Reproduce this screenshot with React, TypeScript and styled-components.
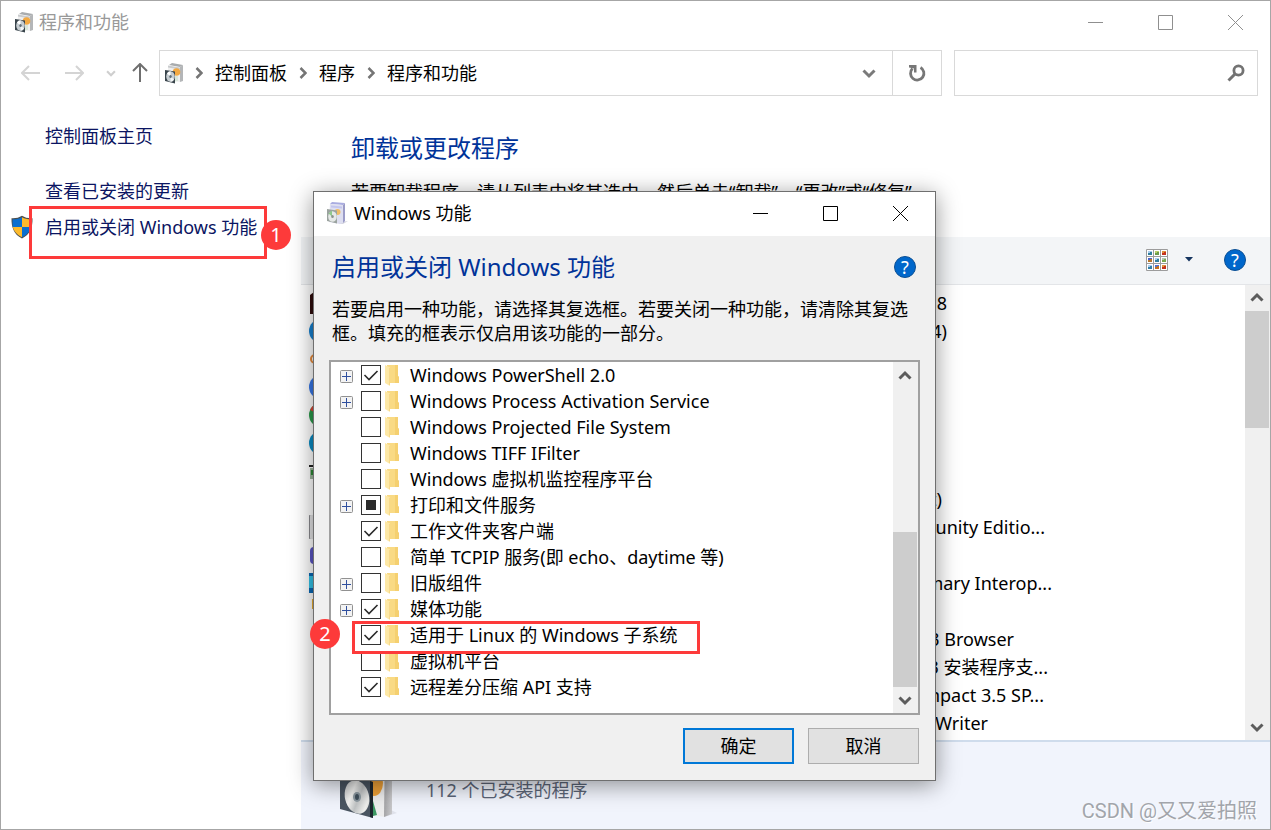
import React from 'react';
import styled, { createGlobalStyle, css } from 'styled-components';

const Global = createGlobalStyle`
  *, *::before, *::after { box-sizing: border-box; }
  body {
    margin: 0;
    background: #ffffff;
    color: #000000;
    font: 18px/24px "Noto Sans", "Noto Sans CJK SC", sans-serif;
  }
  button, input { font: inherit; color: inherit; }
  h1, h2, p, ul { margin: 0; padding: 0; font-weight: 400; }
  ul { list-style: none; }
  svg { display: block; flex: none; }
`;

const plainButton = css`
  display: flex;
  align-items: center;
  justify-content: center;
  padding: 0;
  border: 0;
  background: transparent;
`;

/* ---------- window frame ---------- */

const Window = styled.div`
  position: relative;
  display: flex;
  flex-direction: column;
  min-height: 100vh;
  border: 1px solid #a6a6a6;
  overflow: hidden;
`;

const TitleBar = styled.header<{ $muted?: boolean }>`
  display: flex;
  align-items: center;
  height: 44px;
  padding: 0 0 2px ${p => (p.$muted ? 14 : 12)}px;
  gap: 6px;
  background: #ffffff;
  color: ${p => (p.$muted ? '#999999' : '#000000')};
`;

const TitleText = styled.span`
  flex: 1;
  white-space: nowrap;
`;

const CaptionGroup = styled.div`
  display: flex;
`;

const CaptionButton = styled.button`
  ${plainButton}
  width: 70px;
  height: 42px;
`;

const NavBar = styled.nav`
  display: flex;
  align-items: center;
  height: 46px;
  margin: 5px 12px 0 14px;
`;

const NavButton = styled.button<{ $width: number }>`
  ${plainButton}
  width: ${p => p.$width}px;
  height: 46px;
`;

const AddressBar = styled.div`
  display: flex;
  flex: 1;
  align-items: center;
  height: 46px;
  margin-right: 12px;
  padding-left: 5px;
  border: 1px solid #d9d9d9;
`;

const Crumbs = styled.div`
  display: flex;
  flex: 1;
  align-items: center;
  gap: 12px;
`;

const Crumb = styled.a`
  color: #000000;
  text-decoration: none;
  white-space: nowrap;
`;

const RefreshButton = styled.button`
  ${plainButton}
  width: 49px;
  height: 44px;
  border-left: 1px solid #d9d9d9;
`;

const SearchBox = styled.label`
  display: flex;
  align-items: center;
  width: 304px;
  height: 46px;
  padding-right: 12px;
  border: 1px solid #d9d9d9;
`;

const SearchInput = styled.input`
  flex: 1;
  min-width: 0;
  height: 44px;
  padding: 0 12px;
  border: 0;
  outline: 0;
  background: transparent;
`;

const Body = styled.div`
  display: flex;
  flex: 1;
`;

/* ---------- left column ---------- */

const Sidebar = styled.aside`
  display: flex;
  flex-direction: column;
  width: 300px;
  padding: 28px 0 0 10px;
`;

const SideRow = styled.div<{ $gap: number }>`
  position: relative;
  display: flex;
  align-items: center;
  gap: 11px;
  height: 24px;
  margin-bottom: ${p => p.$gap}px;
`;

const IconSlot = styled.span`
  width: 23px;
`;

const SideLink = styled.a`
  color: #0b1562;
  text-decoration: none;
  white-space: nowrap;
`;

/* ---------- annotations over the windows ---------- */

const Marker = styled.div<{ $x: number; $y: number; $w: number; $h: number }>`
  position: absolute;
  z-index: 2;
  left: ${p => p.$x}px;
  top: ${p => p.$y}px;
  width: ${p => p.$w}px;
  height: ${p => p.$h}px;
  border: 3px solid #fd3a3a;
  pointer-events: none;
`;

const Badge = styled.span<{ $x: number; $y: number }>`
  position: absolute;
  z-index: 3;
  left: ${p => p.$x}px;
  top: ${p => p.$y}px;
  width: 30px;
  height: 30px;
  border-radius: 50%;
  background: #fd3a3a;
  color: #ffffff;
  font-size: 20px;
  line-height: 30px;
  text-align: center;
`;

const Watermark = styled.span`
  position: absolute;
  right: 13px;
  bottom: 6px;
  color: #a2a5ab;
  font: 20px/24px Roboto, "Noto Sans CJK SC", sans-serif;
  text-shadow: 1px 1px 0 #ffffff;
`;

/* ---------- main column ---------- */

const Main = styled.main`
  display: flex;
  flex: 1;
  flex-direction: column;
  min-width: 0;
`;

const Intro = styled.section`
  height: 141px;
  padding: 36px 0 0 50px;
`;

const Heading = styled.h1`
  color: #003399;
  font-size: 24px;
  line-height: 32px;
`;

const IntroText = styled.p`
  margin-top: 16px;
  white-space: nowrap;
`;

const Toolbar = styled.div`
  display: flex;
  align-items: center;
  justify-content: flex-end;
  height: 48px;
  padding: 0 24px 2px 0;
  border-bottom: 1px solid #e3e5e8;
  background: #f3f5f7;
`;

const ToolButton = styled.button<{ $width: number }>`
  ${plainButton}
  width: ${p => p.$width}px;
  height: 32px;
`;

const HelpSlot = styled.div`
  margin-left: 20px;
`;

const ListArea = styled.section`
  display: flex;
  flex: 1;
`;

const ProgramList = styled.ul`
  flex: 1;
  padding: 4px 0 3px 8px;
`;

const Program = styled.li`
  display: flex;
  align-items: center;
  height: 28px;
`;

const ProgramName = styled.span<{ $width: number }>`
  width: ${p => p.$width}px;
  text-align: right;
  white-space: nowrap;
`;

const ScrollTrack = styled.div`
  display: flex;
  flex-direction: column;
  width: 25px;
  background: #f0f0f0;
`;

const ScrollButton = styled.button<{ $height: number }>`
  ${plainButton}
  width: 24px;
  height: ${p => p.$height}px;
`;

const ScrollThumb = styled.div<{ $height: number }>`
  width: 24px;
  height: ${p => p.$height}px;
  background: #cdcdcd;
`;

const Spacer = styled.div`
  flex: 1;
`;

const Details = styled.footer`
  display: flex;
  gap: 27px;
  height: 89px;
  padding: 3px 0 0 38px;
  border-top: 2px solid #cfdcec;
  background: #f1f4fc;
  color: #5b6577;
`;

const DetailsText = styled.span`
  padding-top: 33px;
`;

/* ---------- features dialog ---------- */

const Dialog = styled.section`
  position: absolute;
  left: 312px;
  top: 190px;
  width: 623px;
  border: 1px solid #6f6f6f;
  background: #f0f0f0;
  box-shadow: 0 4px 22px rgba(0, 0, 0, 0.42);
`;

const DialogBody = styled.div`
  padding: 15px 15px 16px;
`;

const DialogHead = styled.div`
  display: flex;
  align-items: center;
  justify-content: space-between;
  padding: 0 4px 0 3px;
`;

const DialogText = styled.p`
  margin: 14px 3px 15px;
`;

const FeatureBox = styled.div`
  display: flex;
  height: 355px;
  border: 2px solid #a0a0a0;
  background: #ffffff;
`;

const FeatureList = styled.ul`
  flex: 1;
  padding-left: 9px;
`;

const Feature = styled.li`
  position: relative;
  display: flex;
  align-items: center;
  height: 26px;
`;

const Expander = styled.button`
  ${plainButton}
  width: 13px;
  height: 13px;
  margin: 2px 8px 0 0;
`;

const ExpanderSlot = styled.span`
  width: 21px;
`;

const FeatureLabel = styled.label`
  display: flex;
  align-items: center;
  gap: 4px;
  white-space: nowrap;
`;

const FeatureText = styled.span`
  padding-left: 6px;
`;

const CheckWrap = styled.span`
  display: grid;
  width: 20px;
  height: 20px;

  & > * { grid-area: 1 / 1; }
`;

const Check = styled.input`
  appearance: none;
  width: 20px;
  height: 20px;
  margin: 0;
  border: 1px solid #333333;
  background: #ffffff;
`;

const Actions = styled.div`
  display: flex;
  justify-content: flex-end;
  gap: 14px;
  margin-top: 13px;
  padding-right: 1px;
`;

const ActionButton = styled.button<{ $primary?: boolean }>`
  width: 111px;
  height: 36px;
  padding: 0;
  border: ${p => (p.$primary ? '2px solid #0078d7' : '1px solid #adadad')};
  background: #e1e1e1;
`;

/* ---------- drawings ---------- */

const ProgramsIcon = ({ tint = '#3a454c' }: { tint?: string }) => (
  <svg width="18" height="22" viewBox="0 0 18 22" aria-hidden="true">
    <path d="M4 3 7 1l11 2-3 2z" fill="#a9acae" />
    <path d="M3 4.500 15 6.500V20L3 18z" fill="#efefef" />
    <path d="M3 3.500 15 5.500v2l-12-2z" fill="#c9cbcd" />
    <path d="m15 5 3-2v16l-3 1z" fill="#b4b6b8" />
    <circle cx="11.500" cy="10" r="3.800" fill="#f3a942" />
    <path d="M10 14h3v5l-3 .5z" fill="#d9e6da" />
    <path d="M0 8 10 9.500V21.500L0 19z" fill={tint} />
    <ellipse cx="5.500" cy="14.500" rx="4.300" ry="5.200" fill="#c6cdd1" />
    <path d="M5.500 14.500 2 11.500a4.300 5 0 0 1 3.500-2.200z" fill="#ffffff" />
    <path d="m5.500 14.500 3.500 3a4.300 5 0 0 1-3.500 2.200z" fill="#f4f6f7" />
    <ellipse cx="5.500" cy="14.500" rx="1.200" ry="1.500" fill="#5f6d76" />
  </svg>
);

const FeaturesIcon = () => (
  <svg width="22" height="24" viewBox="0 0 22 24" aria-hidden="true">
    <path d="M14 21 22 20l-5 3-4 0z" fill="#d5d5df" />
    <path d="M4 3 6 1l13 1-2 2z" fill="#a9ace0" />
    <path d="M4 3 17 4v18l-3 1L3 21z" fill="#dedff0" />
    <path d="m17 4 2-2v18l-2 2z" fill="#9b9cc8" />
    <path d="M5 4.500 16 5.500v2L5 6.500z" fill="#c3c5ee" />
    <circle cx="11.500" cy="11" r="3" fill="#efbd66" />
    <path d="M1 8 11 9.500v13L1 20z" fill="#9ba39f" />
    <ellipse cx="6.500" cy="15.500" rx="4.300" ry="5.300" fill="#e6e9e7" />
    <path d="M2.500 12.500 6 9.500v6z" fill="#8fc98c" />
    <ellipse cx="6.500" cy="15.500" rx="1.300" ry="1.600" fill="#8a918e" />
  </svg>
);

const BigProgramsIcon = () => (
  <svg width="60" height="76" viewBox="0 0 60 76" aria-hidden="true">
    <defs>
      <linearGradient id="disc" x1="0" y1="0" x2="1" y2="1">
        <stop offset="0" stopColor="#b9bcbd" />
        <stop offset="0.350" stopColor="#f3f3f1" />
        <stop offset="0.550" stopColor="#bfc2c3" />
        <stop offset="0.800" stopColor="#efefed" />
        <stop offset="1" stopColor="#b2b5b6" />
      </linearGradient>
      <linearGradient id="side" x1="0" x2="1">
        <stop offset="0" stopColor="#a3a3a5" />
        <stop offset="1" stopColor="#c9c9cb" />
      </linearGradient>
    </defs>
    <path d="m45 72 13-4-6-3-7 2z" fill="#dfe1ea" />
    <path d="M20 6h26v66l-14-2z" fill="#ececec" />
    <path d="M46 6h7v63l-8 3z" fill="url(#side)" />
    <ellipse cx="35" cy="38" rx="9" ry="13" fill="#eda037" />
    <path d="m34 56 4 14-4 1z" fill="#3d9863" />
    <path d="M1 28 34 37v36L1 64z" fill="#4a5561" />
    <path d="m31 36 3 1v36l-3-1z" fill="#1d262e" />
    <ellipse cx="18" cy="52" rx="12" ry="17" transform="rotate(-14 18 52)" fill="url(#disc)" />
    <ellipse cx="18" cy="52" rx="4" ry="5" fill="#8a969e" />
    <ellipse cx="18" cy="52" rx="2" ry="3" fill="#3f4f5b" />
  </svg>
);

const MinIcon = ({ color }: { color: string }) => (
  <svg width="15" height="15" viewBox="0 0 15 15" aria-hidden="true">
    <path d="M0 7.500h15" stroke={color} />
  </svg>
);
const MaxIcon = ({ color }: { color: string }) => (
  <svg width="15" height="15" viewBox="0 0 15 15" aria-hidden="true">
    <path d="M.5.500h14v14H.5z" stroke={color} fill="none" />
  </svg>
);
const CloseIcon = ({ color }: { color: string }) => (
  <svg width="15" height="15" viewBox="0 0 15 15" aria-hidden="true">
    <path d="m0 0 15 15M15 0 0 15" stroke={color} />
  </svg>
);

const Captions = ({ color }: { color: string }) => (
  <CaptionGroup>
    <CaptionButton aria-label="最小化"><MinIcon color={color} /></CaptionButton>
    <CaptionButton aria-label="最大化"><MaxIcon color={color} /></CaptionButton>
    <CaptionButton aria-label="关闭"><CloseIcon color={color} /></CaptionButton>
  </CaptionGroup>
);

const ArrowIcon = ({ turn, color }: { turn: number; color: string }) => (
  <svg width="20" height="20" viewBox="0 0 20 20" aria-hidden="true">
    <path
      d="M1 10h18M8 3 1 10l7 7"
      transform={`rotate(${turn} 10 10)`}
      stroke={color}
      strokeWidth="2"
      fill="none"
    />
  </svg>
);

const Chevron = ({ turn = 0, w = 3, color = '#7a7a7a', size = 14 }: {
  turn?: number; w?: number; color?: string; size?: number;
}) => (
  <svg width={size} height={size} viewBox="0 0 14 14" aria-hidden="true">
    <path
      d="m1.500 4.500 5.500 5.500 5.500-5.500"
      transform={`rotate(${turn} 7 7)`}
      stroke={color}
      strokeWidth={w}
      fill="none"
    />
  </svg>
);

const CrumbChevron = () => (
  <svg width="8" height="12" viewBox="0 0 8 12" aria-hidden="true">
    <path d="m1.500 1 5 5-5 5" stroke="#757575" strokeWidth="2.500" fill="none" />
  </svg>
);

const RefreshIcon = () => (
  <svg width="18" height="18" viewBox="0 0 18 18" aria-hidden="true">
    <path d="M12.500 3.500A6.700 6.700 0 1 1 4.500 4.600" stroke="#777777" strokeWidth="2.800" fill="none" />
    <path d="M1 1h7.500v7.500H6V4.500L1 3.500z" fill="#777777" />
  </svg>
);

const SearchIcon = () => (
  <svg width="18" height="18" viewBox="0 0 18 18" aria-hidden="true">
    <circle cx="11.500" cy="6.500" r="4.600" stroke="#737373" strokeWidth="2.800" fill="none" />
    <path d="M8 10 1.500 16.500" stroke="#737373" strokeWidth="3" />
  </svg>
);

const ShieldIcon = () => (
  <svg width="23" height="24" viewBox="0 0 23 24" aria-hidden="true">
    <path d="M11 .8c3 2 6.500 2.600 10.500 2.400.2 9-2.400 16.300-10.500 20.200C2.900 19.500.3 12.200.5 3.200c4 .2 7.500-.4 10.500-2.400z" fill="#4b4f50" />
    <path d="M11 2.200v9.800H1.700c-.3-2.400-.3-5-.1-7.700 3.700.1 6.700-.5 9.400-2.100z" fill="#0a6fd0" />
    <path d="M11 2.200v9.800h9.300c.3-2.400.3-5 .1-7.700-3.700.1-6.700-.5-9.400-2.100z" fill="#fcba2c" />
    <path d="M11 12v10.200C5.900 19.700 2.800 16.300 1.700 12z" fill="#fcba2c" />
    <path d="M11 12v10.200c5.100-2.500 8.200-5.900 9.300-10.200z" fill="#0a6fd0" />
  </svg>
);

const HelpCircle = styled.span`
  display: block;
  width: 22px;
  height: 22px;
  border: 1px solid #0b4f94;
  border-radius: 50%;
  background: #0067cb;
  color: #ffffff;
  font-size: 18px;
  line-height: 20px;
  text-align: center;
`;

const ViewIcon = () => {
  const fills = ['#2f7f9c', '#6b9a4b', '#c4321e', '#b8762a', '#2f7f9c', '#7aa850', '#2f80a8', '#c4701e', '#c4321e'];
  const skies = ['#a9cdee', '#b9cf6a', '#e0903a', '#4860c8', '#a9cdee', '#b0c8b0', '#a9cdee', '#5070d0', '#e0903a'];
  return (
    <svg width="22" height="22" viewBox="0 0 22 22" aria-hidden="true">
      <path d="M.5.500h21v21H.5zM7.500.500v21M14.500.500v21M.5 7.500h21M.5 14.500h21" stroke="#9c9c9c" fill="#ffffff" />
      {fills.map((f, i) => {
        const x = 2 + (i % 3) * 7;
        const y = 2 + Math.floor(i / 3) * 7;
        return (
          <g key={i}>
            <rect x={x} y={y} width="4" height="4" fill={skies[i]} />
            <path d={`M${x} ${y + 2}h2v-1h2v3h-4z`} fill={f} />
          </g>
        );
      })}
    </svg>
  );
};

const DownTriangle = () => (
  <svg width="8" height="5" viewBox="0 0 8 5" aria-hidden="true">
    <path d="M0 0h8L4 4.500z" fill="#15345f" />
  </svg>
);

const FolderIcon = () => (
  <svg width="15" height="22" viewBox="0 0 15 22" aria-hidden="true">
    <path d="M2 1h11v11l1 1v6H2z" fill="#f9da84" />
    <path d="M10 1h3v11l1 1v6h-4z" fill="#f5d070" />
    <path d="m0 1 5 2.500V22L0 19z" fill="#fde8a6" />
    <path d="M4.500 4v17" stroke="#f7d98a" />
  </svg>
);

const PlusBox = () => (
  <svg width="13" height="13" viewBox="0 0 13 13" aria-hidden="true">
    <rect x="0.500" y="0.500" width="12" height="12" rx="1" fill="#f3f3f3" stroke="#919191" />
    <path d="M2 6.500h9M6.500 2v9" stroke="#2f4f9e" />
  </svg>
);

const Tick = () => (
  <svg width="20" height="20" viewBox="0 0 20 20" aria-hidden="true">
    <path d="m3.500 10 4.500 4.500 8.500-8.500" stroke="#2b2b2b" strokeWidth="1.600" fill="none" />
  </svg>
);

const Partial = () => (
  <svg width="20" height="20" viewBox="0 0 20 20" aria-hidden="true">
    <rect x="5" y="5" width="10" height="10" fill="#2b2b2b" />
  </svg>
);

const programArt: Record<string, React.ReactNode> = {
  maroon: <path d="M1 4 5 1h18v22H1z" fill="#2e0c0c" />,
  blue: <circle cx="12" cy="12" r="12" fill="#1781d0" />,
  orange: <circle cx="6" cy="12" r="4" fill="none" stroke="#e98b3a" strokeWidth="2" />,
  azure: <circle cx="12" cy="12" r="12" fill="#3777e8" />,
  chrome: (
    <>
      <circle cx="12" cy="12" r="12" fill="#2b9a4b" />
      <path d="M12 0A12 12 0 0 0 1 7l8 4z" fill="#dc4437" />
    </>
  ),
  teal: <circle cx="12" cy="12" r="12" fill="#0a8cc4" />,
  tool: (
    <>
      <path d="M0 6h20v2H0z" fill="#222222" />
      <path d="M1 9h18v11H1z" fill="#9fb79f" />
      <path d="M2 11h6v5H2z" fill="#2c8a35" />
    </>
  ),
  grey: <rect x="0.500" y="-1" width="22" height="26" rx="2" fill="#e4e4e6" stroke="#8a8a8e" />,
  purple: <rect x="1" y="4" width="22" height="17" rx="4" fill="#5a55c4" />,
  cyan: (
    <>
      <path d="M0 2h22v20H0z" fill="#0a68b4" />
      <path d="M0 5h22v12H0z" fill="#33c3e8" />
    </>
  ),
  yellow: <path d="M3 0h18v10H3z" fill="#efb230" />,
};

const ProgramArt = ({ kind }: { kind?: string }) => (
  <svg width="24" height="24" viewBox="0 0 24 24" aria-hidden="true">
    {kind ? programArt[kind] : null}
  </svg>
);

/* ---------- data ---------- */

const programs: { icon?: string; name?: string; width?: number }[] = [
  { icon: 'maroon', name: '8', width: 614 },
  { icon: 'blue', name: '4)', width: 614 },
  { icon: 'orange' },
  { icon: 'azure' },
  { icon: 'chrome' },
  { icon: 'teal' },
  { icon: 'tool' },
  { name: 't)', width: 609 },
  { icon: 'grey', name: 'munity Editio...', width: 712 },
  { icon: 'purple' },
  { icon: 'cyan', name: 'imary Interop...', width: 719 },
  { icon: 'yellow' },
  { name: '3 Browser', width: 681 },
  { name: '3 安装程序支...', width: 715 },
  { name: 'mpact 3.5 SP...', width: 711 },
  { name: 'Writer', width: 655 },
];

type State = 'on' | 'off' | 'partial';
const features: { name: string; state: State; expandable?: boolean; marked?: boolean }[] = [
  { name: 'Windows PowerShell 2.0', state: 'on', expandable: true },
  { name: 'Windows Process Activation Service', state: 'off', expandable: true },
  { name: 'Windows Projected File System', state: 'off' },
  { name: 'Windows TIFF IFilter', state: 'off' },
  { name: 'Windows 虚拟机监控程序平台', state: 'off' },
  { name: '打印和文件服务', state: 'partial', expandable: true },
  { name: '工作文件夹客户端', state: 'on' },
  { name: '简单 TCPIP 服务(即 echo、daytime 等)', state: 'off' },
  { name: '旧版组件', state: 'off', expandable: true },
  { name: '媒体功能', state: 'on', expandable: true },
  { name: '适用于 Linux 的 Windows 子系统', state: 'on', marked: true },
  { name: '虚拟机平台', state: 'off' },
  { name: '远程差分压缩 API 支持', state: 'on' },
];

const ScrollBar = ({ top, thumb, atEnd }: { top: number; thumb: number; atEnd?: boolean }) => (
  <ScrollTrack>
    <ScrollButton $height={top} aria-label="向上滚动">
      <Chevron turn={180} color="#5c5c5c" />
    </ScrollButton>
    {atEnd && <Spacer />}
    <ScrollThumb $height={thumb} />
    {!atEnd && <Spacer />}
    <ScrollButton $height={26} aria-label="向下滚动">
      <Chevron color="#5c5c5c" />
    </ScrollButton>
  </ScrollTrack>
);

export default function App() {
  return (
    <>
      <Global />
      <Window>
        <TitleBar $muted>
          <ProgramsIcon />
          <TitleText>程序和功能</TitleText>
          <Captions color="#8f8f8f" />
        </TitleBar>

        <NavBar>
          <NavButton $width={32} aria-label="后退"><ArrowIcon turn={0} color="#d4d4d4" /></NavButton>
          <NavButton $width={54} aria-label="前进"><ArrowIcon turn={180} color="#d4d4d4" /></NavButton>
          <NavButton $width={20} aria-label="最近的位置"><Chevron color="#cfcfcf" size={10} /></NavButton>
          <NavButton $width={38} aria-label="上移"><ArrowIcon turn={90} color="#6f6f6f" /></NavButton>
          <AddressBar>
            <Crumbs>
              <ProgramsIcon />
              <CrumbChevron />
              <Crumb href="#panel">控制面板</Crumb>
              <CrumbChevron />
              <Crumb href="#programs">程序</Crumb>
              <CrumbChevron />
              <Crumb href="#features">程序和功能</Crumb>
            </Crumbs>
            <NavButton $width={46} aria-label="以前的位置"><Chevron /></NavButton>
            <RefreshButton aria-label="刷新"><RefreshIcon /></RefreshButton>
          </AddressBar>
          <SearchBox>
            <SearchInput type="text" aria-label="搜索" />
            <SearchIcon />
          </SearchBox>
        </NavBar>

        <Body>
          <Sidebar>
            <SideRow $gap={31}>
              <IconSlot />
              <SideLink href="#home">控制面板主页</SideLink>
            </SideRow>
            <SideRow $gap={12}>
              <IconSlot />
              <SideLink href="#updates">查看已安装的更新</SideLink>
            </SideRow>
            <SideRow $gap={0}>
              <ShieldIcon />
              <SideLink href="#windows-features">启用或关闭 Windows 功能</SideLink>
              <Marker $x={18} $y={-9} $w={238} $h={53} />
              <Badge $x={250} $y={5}>1</Badge>
            </SideRow>
          </Sidebar>

          <Main>
            <Intro>
              <Heading>卸载或更改程序</Heading>
              <IntroText>若要卸载程序，请从列表中将其选中，然后单击“卸载”、“更改”或“修复”。</IntroText>
            </Intro>
            <Toolbar>
              <ToolButton $width={34} aria-label="更改视图"><ViewIcon /></ToolButton>
              <ToolButton $width={30} aria-label="更多选项"><DownTriangle /></ToolButton>
              <HelpSlot>
                <ToolButton $width={22} aria-label="帮助"><HelpCircle>?</HelpCircle></ToolButton>
              </HelpSlot>
            </Toolbar>
            <ListArea>
              <ProgramList>
                {programs.map((p, i) => (
                  <Program key={i}>
                    <ProgramArt kind={p.icon} />
                    {p.name && <ProgramName $width={p.width ?? 0}>{p.name}</ProgramName>}
                  </Program>
                ))}
              </ProgramList>
              <ScrollBar top={26} thumb={117} />
            </ListArea>
            <Details>
              <BigProgramsIcon />
              <DetailsText>112 个已安装的程序</DetailsText>
            </Details>
          </Main>
        </Body>

        <Watermark>CSDN @又又爱拍照</Watermark>

        <Dialog role="dialog" aria-label="Windows 功能">
          <TitleBar>
            <FeaturesIcon />
            <TitleText>Windows 功能</TitleText>
            <Captions color="#000000" />
          </TitleBar>
          <DialogBody>
            <DialogHead>
              <Heading as="h2">启用或关闭 Windows 功能</Heading>
              <ToolButton $width={22} aria-label="帮助"><HelpCircle>?</HelpCircle></ToolButton>
            </DialogHead>
            <DialogText>
              若要启用一种功能，请选择其复选框。若要关闭一种功能，请清除其复选框。填充的框表示仅启用该功能的一部分。
            </DialogText>
            <FeatureBox>
              <FeatureList>
                {features.map(f => (
                  <Feature key={f.name}>
                    {f.expandable ? (
                      <Expander aria-label={`展开 ${f.name}`}><PlusBox /></Expander>
                    ) : (
                      <ExpanderSlot />
                    )}
                    <FeatureLabel>
                      <CheckWrap>
                        <Check type="checkbox" defaultChecked={f.state === 'on'} />
                        {f.state === 'on' && <Tick />}
                        {f.state === 'partial' && <Partial />}
                      </CheckWrap>
                      <FolderIcon />
                      <FeatureText>{f.name}</FeatureText>
                    </FeatureLabel>
                    {f.marked && (
                      <>
                        <Marker $x={12} $y={-1} $w={348} $h={33} />
                        <Badge $x={-30} $y={-3}>2</Badge>
                      </>
                    )}
                  </Feature>
                ))}
              </FeatureList>
              <ScrollBar top={28} thumb={155} atEnd />
            </FeatureBox>
            <Actions>
              <ActionButton $primary>确定</ActionButton>
              <ActionButton>取消</ActionButton>
            </Actions>
          </DialogBody>
        </Dialog>
      </Window>
    </>
  );
}
